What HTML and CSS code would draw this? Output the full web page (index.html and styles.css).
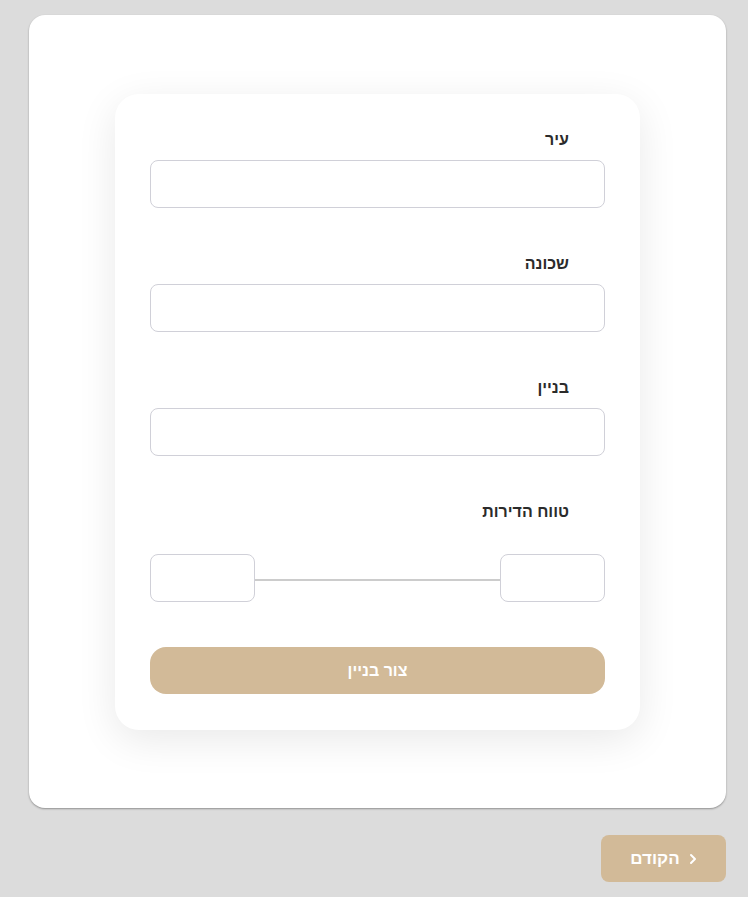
FILE: index.html
```html
<!DOCTYPE html>
<html lang="he" dir="rtl">
<head>
<meta charset="utf-8">
<title>צור בניין</title>
<link rel="stylesheet" href="styles.css">
</head>
<body>
<div class="page">
  <div class="outer">
    <form class="card">
      <div class="field">
        <label class="label">עיר</label>
        <input class="input" type="text">
      </div>
      <div class="field">
        <label class="label">שכונה</label>
        <input class="input" type="text">
      </div>
      <div class="field">
        <label class="label">בניין</label>
        <input class="input" type="text">
      </div>
      <div class="field range-field">
        <label class="label">טווח הדירות</label>
        <div class="range">
          <input class="input small" type="text">
          <span class="line"></span>
          <input class="input small" type="text">
        </div>
      </div>
      <button type="button" class="submit">צור בניין</button>
    </form>
  </div>
  <div class="footer">
    <button type="button" class="back">
      <svg class="chev" width="8" height="12" viewBox="0 0 8 12"><path d="M2 2 L6 6 L2 10" fill="none" stroke="#fff" stroke-width="2" stroke-linecap="round" stroke-linejoin="round"/></svg>
      <span>הקודם</span>
    </button>
  </div>
</div>
</body>
</html>
```
FILE: styles.css
```css
* { box-sizing: border-box; }
html, body { margin: 0; padding: 0; }
body {
  background: #dcdcdc;
  font-family: "Liberation Sans", Arial, sans-serif;
  width: 748px;
  height: 897px;
  overflow: hidden;
}
.page {
  padding: 15px 22px 0 29px;
}
.outer {
  background: #fff;
  border-radius: 16px;
  height: 793px;
  box-shadow: 0 1px 2px rgba(0,0,0,0.35);
  padding-top: 79px;
  display: flex;
  justify-content: center;
  align-items: flex-start;
}
.card {
  width: 525px;
  background: #fff;
  border-radius: 24px;
  box-shadow: 0 10px 40px rgba(0,0,0,0.09);
  padding: 36px 35px 36px;
  display: flex;
  flex-direction: column;
}
.card > * { flex-shrink: 0; }
.field {
  display: flex;
  flex-direction: column;
  margin-bottom: 46px;
}
.label {
  font-weight: bold;
  font-size: 16px;
  line-height: 20px;
  color: #2b2b2b;
  padding-right: 36px;
  margin-bottom: 10px;
}
.input {
  height: 48px;
  width: 100%;
  border: 1px solid #d0d0d8;
  border-radius: 8px;
  background: #fff;
  font: inherit;
  outline: none;
}
.range-field { margin-bottom: 45px; }
.range-field .label { margin-bottom: 32px; }
.range {
  display: flex;
  align-items: center;
}
.input.small {
  width: 105px;
  flex: none;
}
.line {
  flex: 1;
  height: 2px;
  margin-top: 3px;
  background: #cccccc;
}
.submit {
  height: 47px;
  width: 100%;
  border: none;
  border-radius: 16px;
  background: #d2ba98;
  color: #fff;
  font: inherit;
  font-weight: bold;
  font-size: 16px;
  cursor: pointer;
}
.footer {
  display: flex;
  justify-content: flex-start;
  padding-top: 27px;
}
.back {
  width: 125px;
  height: 47px;
  border: none;
  border-radius: 8px;
  background: #d2ba98;
  color: #fff;
  font: inherit;
  font-weight: bold;
  font-size: 17px;
  display: flex;
  align-items: center;
  justify-content: center;
  gap: 9px;
  padding: 0;
  cursor: pointer;
}
.chev { display: block; }
```
